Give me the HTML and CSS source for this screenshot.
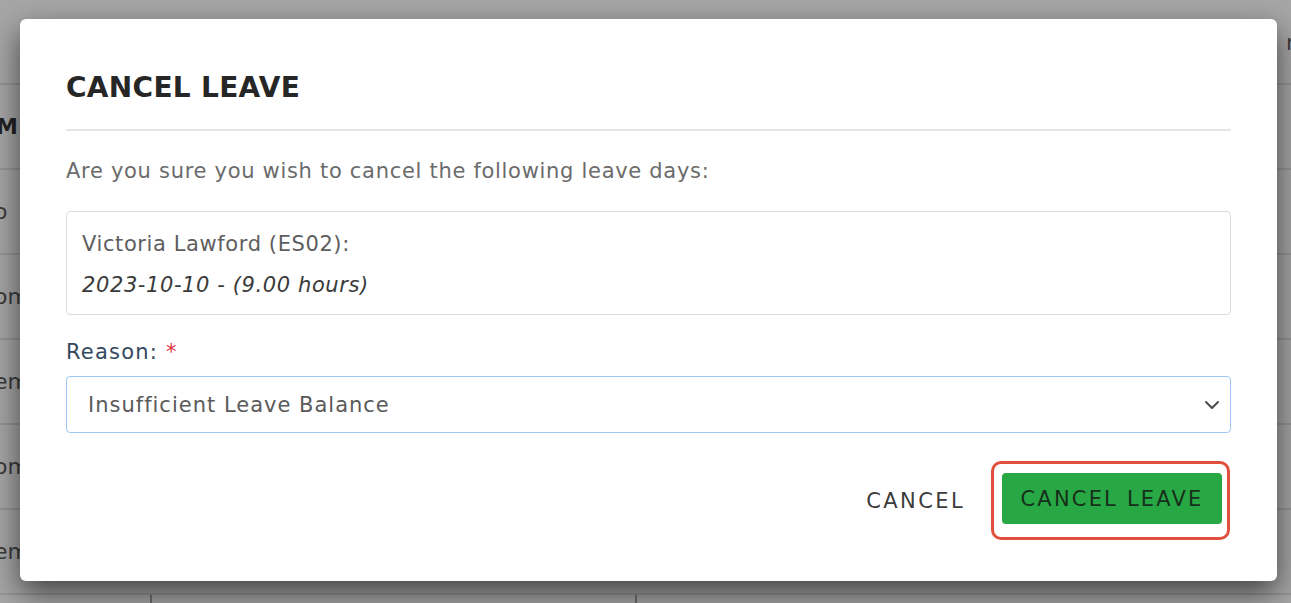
FILE: index.html
```html
<!DOCTYPE html>
<html>
<head>
<meta charset="utf-8">
<link rel="stylesheet" href="styles.css">
</head>
<body>
<div class="page">
  <div class="row row-top"><span class="cell-l"></span><span class="cell-r">r</span></div>
  <div class="row"><span class="cell-l bold">M</span><span class="cell-r"></span></div>
  <div class="row"><span class="cell-l">o</span><span class="cell-r"></span></div>
  <div class="row"><span class="cell-l">om</span><span class="cell-r"></span></div>
  <div class="row"><span class="cell-l">em</span><span class="cell-r"></span></div>
  <div class="row"><span class="cell-l">om</span><span class="cell-r"></span></div>
  <div class="row"><span class="cell-l">em</span><span class="cell-r"></span></div>
  <div class="row row-last"><span class="col c1"></span><span class="col c2"></span></div>
</div>
<div class="backdrop">
  <div class="modal">
    <div class="modal-header">
      <h2 class="title">CANCEL LEAVE</h2>
    </div>
    <div class="modal-body">
      <p class="question">Are you sure you wish to cancel the following leave days:</p>
      <div class="leave-box">
        <div class="emp">Victoria Lawford (ES02):</div>
        <div class="day">2023-10-10 - (9.00 hours)</div>
      </div>
      <label class="label">Reason: <span class="req">*</span></label>
      <div class="select">
        <span class="select-text">Insufficient Leave Balance</span>
        <svg class="chev" width="16" height="10" viewBox="0 0 16 10"><path d="M2 2 L8 8 L14 2" fill="none" stroke="#4a4a4a" stroke-width="2" stroke-linecap="round" stroke-linejoin="round"/></svg>
      </div>
    </div>
    <div class="modal-footer">
      <button class="btn-link">CANCEL</button>
      <span class="highlight"><button class="btn-green">CANCEL LEAVE</button></span>
    </div>
  </div>
</div>
</body>
</html>
```
FILE: styles.css
```css
* { box-sizing: border-box; }
html, body { margin: 0; padding: 0; }
body {
  width: 1291px;
  height: 603px;
  overflow: hidden;
  background: #a6a6a6;
  font-family: "DejaVu Sans", "Open Sans", sans-serif;
  position: relative;
}
.page {
  height: 603px;
  overflow: hidden;
  display: flex;
  flex-direction: column;
  color: #3a3a3a;
  font-size: 22px;
}
.row {
  height: 85px;
  border-bottom: 2px solid #959595;
  display: flex;
  justify-content: space-between;
  align-items: center;
  flex-shrink: 0;
}
.cell-l { margin-left: -6px; }
.cell-r { margin-right: -4px; align-self: flex-start; margin-top: 30px; }
.bold { font-weight: bold; color: #222; margin-left: -4px; }
.row-last { border-bottom: none; }
.col { display: block; width: 0; height: 100%; border-left: 2px solid #6e6e6e; }
.c1 { margin-left: 150px; }
.c2 { margin-right: 654px; }
.backdrop {
  position: absolute;
  inset: 0;
  padding: 19px 14px 22px 20px;
}
.modal {
  width: 1257px;
  height: 562px;
  background: #fff;
  border-radius: 6px;
  box-shadow: 0 12px 30px rgba(0,0,0,0.6);
  padding: 0 46px;
  display: flex;
  flex-direction: column;
}
.modal-header {
  padding-top: 52px;
  padding-bottom: 24px;
  border-bottom: 2px solid #e6e6e6;
}
.title {
  margin: 0;
  font-size: 28px;
  line-height: 34px;
  font-weight: bold;
  color: #262626;
  letter-spacing: 0.3px;
}
.modal-body { padding-top: 25px; }
.question {
  margin: 0;
  font-size: 21px;
  line-height: 30px;
  color: #6b6b6b;
  letter-spacing: 0.7px;
}
.leave-box {
  margin-top: 25px;
  height: 104px;
  border: 1px solid #dcdcdc;
  border-radius: 4px;
  padding: 17px 15px 0 15px;
  font-size: 21px;
  color: #5e5e5e;
  letter-spacing: 0.6px;
}
.emp { line-height: 30px; }
.day { line-height: 30px; margin-top: 11px; font-style: italic; color: #3a3a3a; }
.label {
  display: block;
  margin-top: 22px;
  font-size: 21px;
  line-height: 30px;
  color: #34495e;
  letter-spacing: 1.2px;
}
.req { color: #e0313f; }
.select {
  margin-top: 9px;
  height: 57px;
  border: 1px solid #9ec8f7;
  border-radius: 4px;
  display: flex;
  align-items: center;
  justify-content: space-between;
  padding: 0 10px 0 21px;
  font-size: 21px;
  color: #5a5a5a;
  letter-spacing: 1px;
}
.chev { display: block; }
.modal-footer {
  display: flex;
  justify-content: flex-end;
  align-items: center;
  margin-top: 28px;
  margin-right: 1px;
}
.btn-link {
  background: none;
  border: none;
  font-family: inherit;
  font-size: 21px;
  color: #3c3c3c;
  padding: 0;
  margin-right: 26px;
  letter-spacing: 2.4px;
}
.highlight {
  display: block;
  border: 3px solid #e1503f;
  border-radius: 10px;
  padding: 9px 5px 13px 8px;
}
.btn-green {
  display: block;
  width: 220px;
  height: 51px;
  background: #28a745;
  border: none;
  border-radius: 4px;
  font-family: inherit;
  font-size: 21px;
  color: #16301b;
  padding: 0;
  letter-spacing: 2.2px;
}
```
